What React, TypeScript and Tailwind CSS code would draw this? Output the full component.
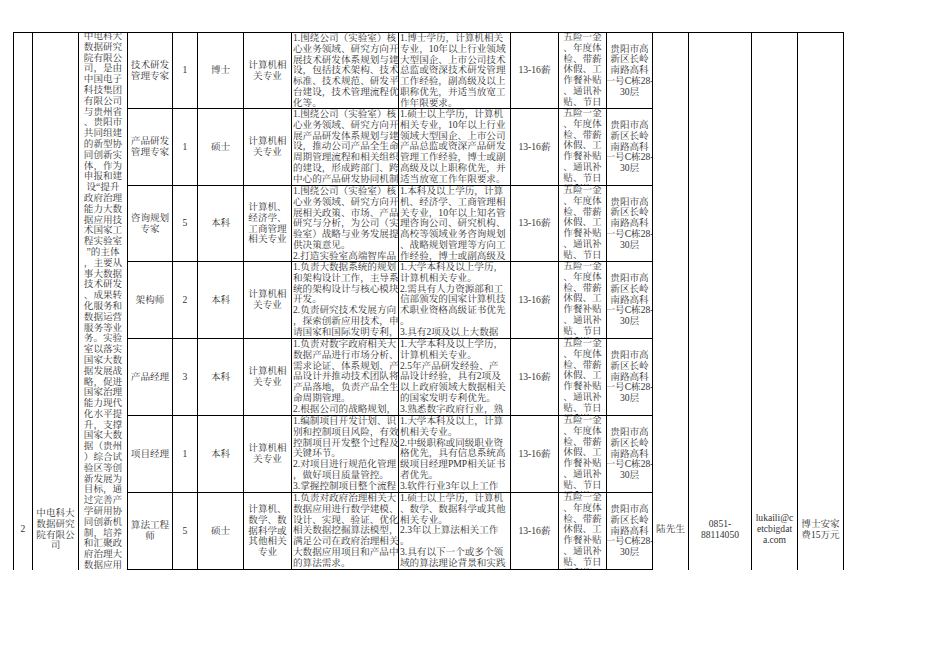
import React from "react";

type Job = {
  title: string[];
  count: string;
  degree: string;
  major: string[];
  duties: string[];
  reqs: string[];
};

const companyIntro = [
  "中电科大", "数据研究", "院有限公", "司，是由", "中国电子", "科技集团", "有限公司", "与贵州省",
  "、贵阳市", "共同组建", "的新型协", "同创新实", "体，作为", "申报和建", "设“提升", "政府治理",
  "能力大数", "据应用技", "术国家工", "程实验室", "”的主体", "，主要从", "事大数据", "技术研发",
  "、成果转", "化服务和", "数据运营", "服务等业", "务。实验", "室以落实", "国家大数", "据发展战",
  "略，促进", "国家治理", "能力现代", "化水平提", "升，支撑", "国家大数", "据（贵州", "）综合试",
  "验区等创", "新发展为", "目标，通", "过完善产", "学研用协", "同创新机", "制，培养", "和汇聚政",
  "府治理大", "数据应用", "高端人才",
];

const benefits = ["五险一金", "、年度体", "检、带薪", "休假、工", "作餐补贴", "、通讯补", "贴、节日", "福利等。"];
const address = ["贵阳市高", "新区长岭", "南路高科", "一号C栋28-", "30层"];

const jobs: Job[] = [
  {
    title: ["技术研发", "管理专家"],
    count: "1",
    degree: "博士",
    major: ["计算机相", "关专业"],
    duties: [
      "1.围绕公司（实验室）核",
      "心业务领域、研究方向开",
      "展技术研发体系规划与建",
      "设，包括技术架构、技术",
      "标准、技术规范、研发平",
      "台建设，技术管理流程优",
      "化等。",
    ],
    reqs: [
      "1.博士学历，计算机相关",
      "专业，10年以上行业领域",
      "大型国企、上市公司技术",
      "总监或资深技术研发管理",
      "工作经验，副高级及以上",
      "职称优先，并适当放宽工",
      "作年限要求。",
    ],
  },
  {
    title: ["产品研发", "管理专家"],
    count: "1",
    degree: "硕士",
    major: ["计算机相", "关专业"],
    duties: [
      "1.围绕公司（实验室）核",
      "心业务领域、研究方向开",
      "展产品研发体系规划与建",
      "设，推动公司产品全生命",
      "周期管理流程和相关组织",
      "的建设，形成跨部门、跨",
      "中心的产品研发协同机制",
      "。",
    ],
    reqs: [
      "1.硕士以上学历，计算机",
      "相关专业，10年以上行业",
      "领域大型国企、上市公司",
      "产品总监或资深产品研发",
      "管理工作经验，博士或副",
      "高级及以上职称优先，并",
      "适当放宽工作年限要求。",
    ],
  },
  {
    title: ["咨询规划", "专家"],
    count: "5",
    degree: "本科",
    major: ["计算机、", "经济学、", "工商管理", "相关专业"],
    duties: [
      "1.围绕公司（实验室）核",
      "心业务领域、研究方向开",
      "展相关政策、市场、产品",
      "研究与分析，为公司（实",
      "验室）战略与业务发展提",
      "供决策意见。",
      "2.打造实验室高端智库品",
      "牌。",
    ],
    reqs: [
      "1.本科及以上学历，计算",
      "机、经济学、工商管理相",
      "关专业，10年以上知名管",
      "理咨询公司、研究机构、",
      "高校等领域业务咨询规划",
      "、战略规划管理等方向工",
      "作经验，博士或副高级及",
      "以上职称优先。",
    ],
  },
  {
    title: ["架构师"],
    count: "2",
    degree: "本科",
    major: ["计算机相", "关专业"],
    duties: [
      "1.负责大数据系统的规划",
      "和架构设计工作，主导系",
      "统的架构设计与核心模块",
      "开发。",
      "2.负责研究技术发展方向",
      "，探索创新应用技术，申",
      "请国家和国际发明专利，",
      "推动技术成果转化。",
    ],
    reqs: [
      "1.大学本科及以上学历，",
      "计算机相关专业。",
      "2.需具有人力资源部和工",
      "信部颁发的国家计算机技",
      "术职业资格高级证书优先",
      "。",
      "3.具有2项及以上大数据",
      "相关发明专利优先。",
    ],
  },
  {
    title: ["产品经理"],
    count: "3",
    degree: "本科",
    major: ["计算机相", "关专业"],
    duties: [
      "1.负责对数字政府相关大",
      "数据产品进行市场分析、",
      "需求论证、体系规划、产",
      "品设计并推动技术团队将",
      "产品落地，负责产品全生",
      "命周期管理。",
      "2.根据公司的战略规划，",
      "制定产品发展路线。",
    ],
    reqs: [
      "1.大学本科及以上学历，",
      "计算机相关专业。",
      "2.5年产品研发经验、产",
      "品设计经验，具有2项及",
      "以上政府领域大数据相关",
      "的国家发明专利优先。",
      "3.熟悉数字政府行业，熟",
      "悉相关业务流程。",
    ],
  },
  {
    title: ["项目经理"],
    count: "1",
    degree: "本科",
    major: ["计算机相", "关专业"],
    duties: [
      "1.编制项目开发计划、识",
      "别和控制项目风险，有效",
      "控制项目开发整个过程及",
      "关键环节。",
      "2.对项目进行规范化管理",
      "，做好项目质量管控。",
      "3.掌握控制项目整个流程",
      "及进度。",
    ],
    reqs: [
      "1.大学本科及以上，计算",
      "机相关专业。",
      "2.中级职称或同级职业资",
      "格优先，具有信息系统高",
      "级项目经理PMP相关证书",
      "者优先。",
      "3.软件行业3年以上工作",
      "经验。",
    ],
  },
  {
    title: ["算法工程", "师"],
    count: "5",
    degree: "硕士",
    major: ["计算机、", "数学、数", "据科学或", "其他相关", "专业"],
    duties: [
      "1.负责对政府治理相关大",
      "数据应用进行数学建模、",
      "设计、实现、验证、优化",
      "相关数据挖掘算法模型，",
      "满足公司在政府治理相关",
      "大数据应用项目和产品中",
      "的算法需求。",
      "2.负责算法的研究与优化",
    ],
    reqs: [
      "1.硕士以上学历，计算机",
      "、数学、数据科学或其他",
      "相关专业。",
      "2.3年以上算法相关工作",
      "。",
      "3.具有以下一个或多个领",
      "域的算法理论背景和实践",
      "经验。",
    ],
  },
];

function Lines({ lines }: { lines: string[] }) {
  return (
    <>
      {lines.map((line, i) => (
        <div key={i} className="whitespace-nowrap">
          {line}
        </div>
      ))}
    </>
  );
}

const cell = "overflow-hidden border-r border-b border-black";
const centered = "flex flex-col items-center justify-center text-center";

export default function App() {
  return (
    <div className="min-h-screen bg-white pl-[13px] pt-[32px] text-[9.6px] leading-[10.8px] text-[#333] [font-family:'Liberation_Serif','Noto_Serif_CJK_SC','Noto_Sans_CJK_SC',serif]">
      <div className="h-[538px] w-[831px] overflow-hidden">
        <div className="grid grid-cols-[19px_46px_49px_45px_25px_46px_48px_107px_112px_48px_48px_46px_36px_63px_46px_46px] grid-rows-[76px_77px_76px_77px_77px_77px_77px_76px_76px_76px_76px_76px_76px] border-l border-t border-black">
          {/* merged cells on the left */}
          <div className={`col-start-1 row-span-13 row-start-1 border-r border-black ${centered}`}>2</div>
          <div className={`col-start-2 row-span-13 row-start-1 border-r border-black ${centered}`}>
            <Lines lines={["中电科大", "数据研究", "院有限公", "司"]} />
          </div>
          <div className="col-start-3 row-span-13 row-start-1 overflow-hidden border-r border-black text-center">
            <div className="-mt-[2px]">
              <Lines lines={companyIntro} />
            </div>
          </div>

          {/* merged cells on the right */}
          <div className={`col-start-13 row-span-13 row-start-1 border-r border-black ${centered}`}>陆先生</div>
          <div className={`col-start-14 row-span-13 row-start-1 border-r border-black ${centered}`}>
            <Lines lines={["0851-", "88114050"]} />
          </div>
          <div className={`col-start-15 row-span-13 row-start-1 overflow-hidden border-r border-black ${centered}`}>
            <Lines lines={["lukaili@c", "etcbigdat", "a.com"]} />
          </div>
          <div className={`col-start-16 row-span-13 row-start-1 border-r border-black ${centered}`}>
            <Lines lines={["博士安家", "费15万元"]} />
          </div>

          {jobs.map((job, i) => (
            <React.Fragment key={i}>
              <div className={`${cell} ${centered}`}>
                <Lines lines={job.title} />
              </div>
              <div className={`${cell} ${centered}`}>{job.count}</div>
              <div className={`${cell} ${centered}`}>{job.degree}</div>
              <div className={`${cell} ${centered}`}>
                <Lines lines={job.major} />
              </div>
              <div className={`${cell} pl-px`}>
                <Lines lines={job.duties} />
              </div>
              <div className={`${cell} pl-px`}>
                <Lines lines={job.reqs} />
              </div>
              <div className={`${cell} ${centered}`}>13-16薪</div>
              <div className={`${cell} text-center`}>
                <div className="-mt-px">
                  <Lines lines={benefits} />
                </div>
              </div>
              <div className={`${cell} ${centered}`}>
                <Lines lines={address} />
              </div>
            </React.Fragment>
          ))}
        </div>
      </div>
    </div>
  );
}
